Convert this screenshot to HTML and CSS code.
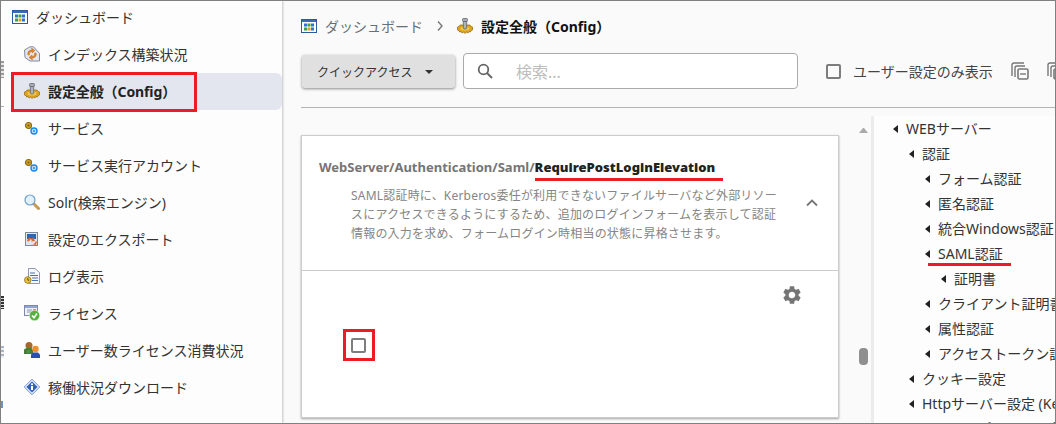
FILE: index.html
```html
<!DOCTYPE html>
<html lang="ja">
<head>
<meta charset="utf-8">
<title>設定全般（Config）</title>
<link rel="stylesheet" href="styles.css">
</head>
<body>
<div class="app">
  <aside class="sidebar">
    <div class="nav-top">
      <svg class="ico" viewBox="0 0 16 16"><rect x=".5" y="1.500" width="15" height="13" fill="#fff" stroke="#2c5a9e"/><rect x="1" y="2" width="14" height="2" fill="#3a6cb5"/><rect x="3" y="5.500" width="3" height="3" fill="#2e74c8"/><rect x="6.500" y="5.500" width="3" height="3" fill="#3aa04a"/><rect x="10" y="5.500" width="3" height="3" fill="#2e74c8"/><rect x="3" y="9.500" width="3" height="3" fill="#3aa04a"/><rect x="6.500" y="9.500" width="3" height="3" fill="#e0a020"/><rect x="10" y="9.500" width="3" height="3" fill="#2e74c8"/></svg>
      <span>ダッシュボード</span>
    </div>
    <a class="nav-item">
      <svg class="ico" viewBox="0 0 16 16"><path d="M.5 4 6 .8h3.500l6 6.700v7.500H6L1 11.500z" fill="#e4e6ee" stroke="#85899a"/><path d="M4 9c-1-3 1-5 4-5l-.5-2L11 4.500 8 7V5.500C6 5.500 5 7 5.500 9zM12 7c1 3-1 5-4 5l.5 2L5 11.500 8 9v1.500c2 0 3-1.500 2.500-3.500z" fill="#e5862a" stroke="#a85a14" stroke-width=".4"/></svg>
      <span>インデックス構築状況</span>
    </a>
    <a class="nav-item is-active">
      <svg class="ico" viewBox="0 0 16 16"><path d="M3 7h10l1 1.500 1.500.5v3l-1.500.5-.5 1.500-1.500-.5-1 1.500-1.500-1-1.500 1.500-1.500-1.500-1.500 1-1-1.500-1.500.5L2.500 13 .5 12V9L2 8.500z" fill="#dfa21c" stroke="#94690c" stroke-width=".7"/><ellipse cx="8" cy="10.500" rx="4.500" ry="2" fill="#f0c64a"/><rect x="5.500" y=".5" width="5" height="3" rx="1" fill="#a9aeb6" stroke="#5f646d" stroke-width=".8"/><path d="M6.300 3.500h3.400V10a1.700 1 0 0 1-3.400 0z" fill="#aeb2b9" stroke="#5f646d" stroke-width=".8"/></svg>
      <span>設定全般（Config）</span>
    </a>
    <a class="nav-item">
      <svg class="ico" viewBox="0 0 16 16"><circle cx="4.500" cy="5.500" r="3" fill="#d8a626" stroke="#8a6a18" stroke-width="1.200"/><circle cx="4.500" cy="5.500" r="1" fill="#6b5314"/><circle cx="10" cy="11" r="3" fill="#bfe0fb" stroke="#1f86e0" stroke-width="1.400"/><circle cx="10" cy="11" r="1" fill="#1f86e0"/></svg>
      <span>サービス</span>
    </a>
    <a class="nav-item">
      <svg class="ico" viewBox="0 0 16 16"><circle cx="4.500" cy="5.500" r="3" fill="#d8a626" stroke="#8a6a18" stroke-width="1.200"/><circle cx="4.500" cy="5.500" r="1" fill="#6b5314"/><circle cx="10" cy="11" r="3" fill="#bfe0fb" stroke="#1f86e0" stroke-width="1.400"/><circle cx="10" cy="11" r="1" fill="#1f86e0"/></svg>
      <span>サービス実行アカウント</span>
    </a>
    <a class="nav-item">
      <svg class="ico" viewBox="0 0 16 16"><path d="m10 10 4.500 4.500" stroke="#c79a52" stroke-width="3" stroke-linecap="round"/><circle cx="6" cy="6" r="5" fill="#e2f1fc" stroke="#6f9fc9" stroke-width="1.200"/></svg>
      <span>Solr(検索エンジン)</span>
    </a>
    <a class="nav-item">
      <svg class="ico" viewBox="0 0 16 16"><rect x="1.500" y="1.500" width="12" height="13" fill="#dfe6f2" stroke="#7f86a0"/><rect x="3" y="3" width="9" height="5" fill="#2f63b5"/><path d="M3 10c1-4 3-4 5-2l1-2 2 4-4 .5 1-1.500c-1-1-2-.5-3 1.500zM7 13c3 1 4-1 5-3l1 1-1 3z" fill="#e0662a"/></svg>
      <span>設定のエクスポート</span>
    </a>
    <a class="nav-item">
      <svg class="ico" viewBox="0 0 16 16"><path d="M4.500 .5H11l4.500 4v11h-11z" fill="#f6f8fc" stroke="#8e98b5"/><path d="M6 5h5M6 7.500h8M8 10h6M8 12.500h6" stroke="#4c6fb0"/><circle cx="3.800" cy="12" r="3.300" fill="#eec535" stroke="#8a7114" stroke-width=".8"/><path d="M3.800 10v2.200h1.500" fill="none" stroke="#333" stroke-width=".8"/></svg>
      <span>ログ表示</span>
    </a>
    <a class="nav-item">
      <svg class="ico" viewBox="0 0 16 16"><rect x=".5" y=".5" width="13" height="10" fill="#eef1f7" stroke="#7f88ab"/><rect x="1" y="1" width="12" height="2" fill="#8ea6d6"/><path d="M3 5h5M3 7h4" stroke="#8e98b5"/><rect x="9" y="4" width="3" height="2" fill="#e58a2e"/><circle cx="10.500" cy="10.500" r="5.200" fill="#54b33e" stroke="#fff" stroke-width=".5"/><path d="m8 10.500 2 2.300 3-4.300" fill="none" stroke="#fff" stroke-width="1.500"/></svg>
      <span>ライセンス</span>
    </a>
    <a class="nav-item">
      <svg class="ico" viewBox="0 0 16 16"><circle cx="5" cy="3.500" r="3.500" fill="#a9662a"/><path d="M0 12V7.500L2.500 6h5L9 8v4z" fill="#4f7a34"/><circle cx="4.500" cy="9.500" r="1.500" fill="#37a247"/><circle cx="11.500" cy="7" r="3.200" fill="#f0902a"/><path d="M7 16v-3.500l2-2h5l2 2V16z" fill="#2452b0"/></svg>
      <span>ユーザー数ライセンス消費状況</span>
    </a>
    <a class="nav-item">
      <svg class="ico" viewBox="0 0 16 16"><path d="M8 .2 15.800 8 8 15.800.2 8z" fill="#dfe8f8" stroke="#5b82c8" stroke-width=".8"/><path d="M8 2.500 13.500 8 8 13.500 2.500 8z" fill="#3560b8"/><rect x="7" y="7" width="2" height="4" fill="#fff"/><rect x="7" y="4.500" width="2" height="1.600" fill="#fff"/></svg>
      <span>稼働状況ダウンロード</span>
    </a>
  </aside>

  <main class="main">
    <nav class="crumbs">
      <svg class="ico" viewBox="0 0 16 16"><rect x=".5" y="1.500" width="15" height="13" fill="#fff" stroke="#2c5a9e"/><rect x="1" y="2" width="14" height="2" fill="#3a6cb5"/><rect x="3" y="5.500" width="3" height="3" fill="#2e74c8"/><rect x="6.500" y="5.500" width="3" height="3" fill="#3aa04a"/><rect x="10" y="5.500" width="3" height="3" fill="#2e74c8"/><rect x="3" y="9.500" width="3" height="3" fill="#3aa04a"/><rect x="6.500" y="9.500" width="3" height="3" fill="#e0a020"/><rect x="10" y="9.500" width="3" height="3" fill="#2e74c8"/></svg>
      <span class="crumb-link">ダッシュボード</span>
      <svg class="crumb-sep" viewBox="0 0 8 12"><path d="m2 1.500 4 4.500-4 4.500" fill="none" stroke="#777" stroke-width="1.400"/></svg>
      <svg class="ico" viewBox="0 0 16 16"><path d="M3 7h10l1 1.500 1.500.5v3l-1.500.5-.5 1.500-1.500-.5-1 1.500-1.500-1-1.500 1.500-1.500-1.500-1.500 1-1-1.500-1.500.5L2.500 13 .5 12V9L2 8.500z" fill="#dfa21c" stroke="#94690c" stroke-width=".7"/><ellipse cx="8" cy="10.500" rx="4.500" ry="2" fill="#f0c64a"/><rect x="5.500" y=".5" width="5" height="3" rx="1" fill="#a9aeb6" stroke="#5f646d" stroke-width=".8"/><path d="M6.300 3.500h3.400V10a1.700 1 0 0 1-3.400 0z" fill="#aeb2b9" stroke="#5f646d" stroke-width=".8"/></svg>
      <strong class="crumb-current">設定全般（Config）</strong>
    </nav>

    <div class="toolbar">
      <button class="quick">クイックアクセス<i class="caret"></i></button>
      <label class="search">
        <svg class="search-ico" viewBox="0 0 16 16"><circle cx="6.500" cy="6.500" r="4.800" fill="none" stroke="#666" stroke-width="1.800"/><path d="m10 10 5 5" stroke="#666" stroke-width="2"/></svg>
        <span>検索...</span>
      </label>
      <i class="check"></i>
      <span class="only-user">ユーザー設定のみ表示</span>
      <svg class="copy" viewBox="0 0 18 18"><path d="M1 14V3a2 2 0 0 1 2-2h10M4 15V6a2 2 0 0 1 2-2h8" fill="none" stroke="#777" stroke-width="1.400"/><rect x="7" y="7" width="10" height="10" rx="1.500" fill="none" stroke="#777" stroke-width="1.600"/><path d="M9 12h6" stroke="#777" stroke-width="1.400"/></svg>
      <svg class="copy" viewBox="0 0 18 18"><path d="M1 14V3a2 2 0 0 1 2-2h10M4 15V6a2 2 0 0 1 2-2h8" fill="none" stroke="#777" stroke-width="1.400"/><rect x="7" y="7" width="10" height="10" rx="1.500" fill="none" stroke="#777" stroke-width="1.600"/><path d="M9 12h6" stroke="#777" stroke-width="1.400"/></svg>
    </div>

    <div class="body">
      <section class="card">
        <header class="card-head">
          <h2 class="card-title">WebServer/Authentication/Saml/<b>RequirePostLoginElevation</b></h2>
          <div class="card-desc-row">
            <p class="card-desc">SAML認証時に、Kerberos委任が利用できないファイルサーバなど外部リソー<br>スにアクセスできるようにするため、追加のログインフォームを表示して認証<br>情報の入力を求め、フォームログイン時相当の状態に昇格させます。</p>
            <svg class="chev" viewBox="0 0 12 8"><path d="M1 6.500 6 1.500l5 5" fill="none" stroke="#777" stroke-width="1.800"/></svg>
          </div>
        </header>
        <div class="card-body">
          <svg class="gear" viewBox="0 0 24 24"><path fill="#757575" d="M19.140 12.940c.04-.3.060-.61.060-.94 0-.32-.02-.64-.07-.94l2.030-1.580a.49.49 0 0 0 .12-.61l-1.920-3.320a.488.488 0 0 0-.59-.22l-2.390.96c-.5-.38-1.030-.7-1.620-.94l-.36-2.540a.484.484 0 0 0-.48-.41h-3.840c-.24 0-.43.17-.47.41l-.36 2.540c-.59.24-1.130.57-1.620.94l-2.390-.96c-.22-.08-.47 0-.59.22L2.740 8.870c-.12.21-.08.47.12.61l2.030 1.580c-.05.3-.09.63-.09.94s.02.64.07.94l-2.030 1.580a.49.49 0 0 0-.12.61l1.920 3.320c.12.22.37.29.59.22l2.390-.96c.5.38 1.030.7 1.620.94l.36 2.540c.05.24.24.41.48.41h3.840c.24 0 .44-.17.47-.41l.36-2.540c.59-.24 1.130-.56 1.620-.94l2.390.96c.22.08.47 0 .59-.22l1.920-3.320c.12-.22.07-.47-.12-.61l-2.010-1.580zM12 15.600A3.610 3.610 0 0 1 8.400 12c0-1.980 1.620-3.600 3.600-3.600s3.600 1.620 3.600 3.600-1.620 3.600-3.600 3.600z"/></svg>
          <i class="check"></i>
        </div>
      </section>

      <div class="scroll">
        <i class="scroll-up"></i>
        <i class="scroll-thumb"></i>
      </div>

      <ul class="tree">
        <li class="l0">WEBサーバー</li>
        <li class="l1">認証</li>
        <li class="l2">フォーム認証</li>
        <li class="l2">匿名認証</li>
        <li class="l2">統合Windows認証</li>
        <li class="l2">SAML認証</li>
        <li class="l3">証明書</li>
        <li class="l2">クライアント証明書認証</li>
        <li class="l2">属性認証</li>
        <li class="l2">アクセストークン認証</li>
        <li class="l1">クッキー設定</li>
        <li class="l1">Httpサーバー設定 (Kestrel)</li>
        <li class="l1">リバースプロキシ設定</li>
      </ul>
    </div>
  </main>

  <i class="mark mark-config"></i>
  <i class="mark mark-title"></i>
  <i class="mark mark-check"></i>
  <i class="mark mark-tree"></i>

  <i class="bleed bleed-a"></i>
  <i class="bleed bleed-b"></i>
  <i class="bleed bleed-c"></i>
  <i class="bleed bleed-d"></i>
  <i class="bleed bleed-e"></i>
</div>
</body>
</html>
```
FILE: styles.css
```css
* { box-sizing: border-box; }
html, body { margin: 0; height: 100%; overflow: hidden; }
body { font-family: "Noto Sans", "Noto Sans CJK JP", sans-serif; font-size: 14px; color: #333; }

.app { position: relative; display: flex; width: 1056px; height: 424px; overflow: hidden; background: #fafafa; border: 1px solid #808080; }

.ico { flex: none; width: 16px; height: 16px; }

.sidebar { flex: none; width: 281px; background: #fdfdfd; box-shadow: 1px 0 2px #c4c4c4; display: flex; flex-direction: column; }
.nav-top { flex: none; height: 35px; padding: 0 0 4px 11px; display: flex; align-items: center; gap: 8px; }
.nav-item { flex: none; height: 37px; margin-left: 10px; padding: 0 0 2px 13px; display: flex; align-items: center; gap: 8px; border-radius: 0 6px 6px 0; }
.nav-item.is-active { background: #e3e6ee; font-weight: 700; color: #222; letter-spacing: -.1px; }

.main { flex: 1; min-width: 0; padding-left: 19px; display: flex; flex-direction: column; }
.crumbs { flex: none; height: 51px; padding-bottom: 2px; display: flex; align-items: center; }
.crumb-link { margin-left: 8px; color: #6a6e75; }
.crumb-sep { width: 8px; height: 12px; margin: 0 13px; }
.crumb-current { margin-left: 8px; color: #111; font-weight: 700; }

.toolbar { flex: none; height: 56px; padding-top: 1px; border-bottom: 1px solid #b4b4b4; display: flex; align-items: flex-start; }
.quick { flex: none; width: 153px; height: 33px; margin: 2px 0 0 1px; padding: 0 0 0 15px; border: 0; border-radius: 3px; background: #e0e0e0; box-shadow: 0 1px 3px rgba(0,0,0,.45); font: inherit; font-size: 12px; color: #333; display: flex; align-items: center; }
.caret { margin-left: 13px; border: 4.500px solid transparent; border-top-color: #333; border-bottom: 0; }
.search { flex: none; width: 335px; height: 36px; margin-left: 8px; padding-left: 13px; background: #fff; border: 1px solid #aaa; border-radius: 4px; display: flex; align-items: center; font-size: 16px; color: #bdbdbd; }
.search-ico { width: 16px; height: 16px; margin-right: 23px; }
.check { display: block; flex: none; width: 15px; height: 15px; border: 2px solid #7d7d7d; border-radius: 2px; background: #fff; }
.toolbar .check { margin: 11px 12px 0 28px; background: none; }
.only-user { flex: none; margin-top: 8px; color: #444; white-space: nowrap; }
.copy { flex: none; width: 18px; height: 18px; margin: 9px 0 0 18px; }

.body { flex: 1; min-height: 0; display: flex; align-items: flex-start; }

.card { flex: none; width: 538px; height: 283px; margin-top: 27px; background: #fff; border: 1px solid #ccc; box-shadow: 0 1px 2px rgba(0,0,0,.35); }
.card-head { height: 135px; border-bottom: 1px solid #ccc; padding: 20px 16px 0 17px; }
.card-title { margin: 0; font-size: 13px; line-height: 22px; font-weight: 700; color: #757575; white-space: nowrap; }
.card-title b { color: #222; }
.card-desc-row { display: flex; align-items: flex-start; padding-left: 32px; margin-top: 8px; }
.card-desc { margin: 0; width: 440px; font-size: 12px; line-height: 19px; letter-spacing: .2px; color: #858585; white-space: nowrap; }
.chev { width: 12px; height: 8px; margin: 13px 0 0 15px; }

.card-body { position: relative; height: 146px; padding: 67px 0 0 49px; }
.gear { position: absolute; top: 13px; right: 35px; width: 22px; height: 22px; }

.scroll { flex: none; width: 32px; height: 305px; padding: 20px 0 0 20px; display: flex; flex-direction: column; }
.scroll-up { display: block; width: 9px; border: 4.500px solid transparent; border-top: 0; border-bottom: 5px solid #aaa; }
.scroll-thumb { display: block; width: 9px; height: 17px; margin-top: 215px; background: #8f8f8f; border-radius: 4px; }

.tree { flex: 1; min-width: 0; height: 320px; margin: 8px 0 0; padding: 0; list-style: none; background: #fdfdfd; border-left: 3px solid #ececec; white-space: nowrap; overflow: hidden; }
.tree li { height: 25px; line-height: 25px; display: flex; align-items: center; color: #333; }
.tree li::before { content: ""; flex: none; margin-right: 8px; border: 4px solid transparent; border-left: 0; border-right: 5px solid #222; }
.l0 { padding-left: 19px; }
.l1 { padding-left: 35px; }
.l2 { padding-left: 51px; }
.l3 { padding-left: 67px; }

.mark { position: absolute; display: block; }
.mark-config { left: 10px; top: 71px; width: 186px; height: 40px; border: 3px solid #ed1c24; }
.mark-title { left: 534px; top: 177px; width: 188px; height: 3px; background: #ed1c24; }
.mark-check { left: 342px; top: 328px; width: 32px; height: 32px; border: 3px solid #ed1c24; }
.mark-tree { left: 927px; top: 262px; width: 83px; height: 3px; background: #ed1c24; }

.bleed { position: absolute; left: 0; display: block; width: 3px; }
.bleed-a { top: 60px; height: 17px; background: repeating-linear-gradient(#9a9a9a 0 2px, #e4e4e4 2px 4px); }
.bleed-b { top: 105px; height: 1px; background: #aaa; }
.bleed-c { top: 295px; height: 13px; background: repeating-linear-gradient(#333 0 2px, #ddd 2px 3px); }
.bleed-d { top: 345px; height: 12px; background: repeating-linear-gradient(#a9b4c4 0 2px, #eee 2px 4px); }
.bleed-e { top: 400px; height: 7px; width: 2px; background: #6a94c4; }
```
